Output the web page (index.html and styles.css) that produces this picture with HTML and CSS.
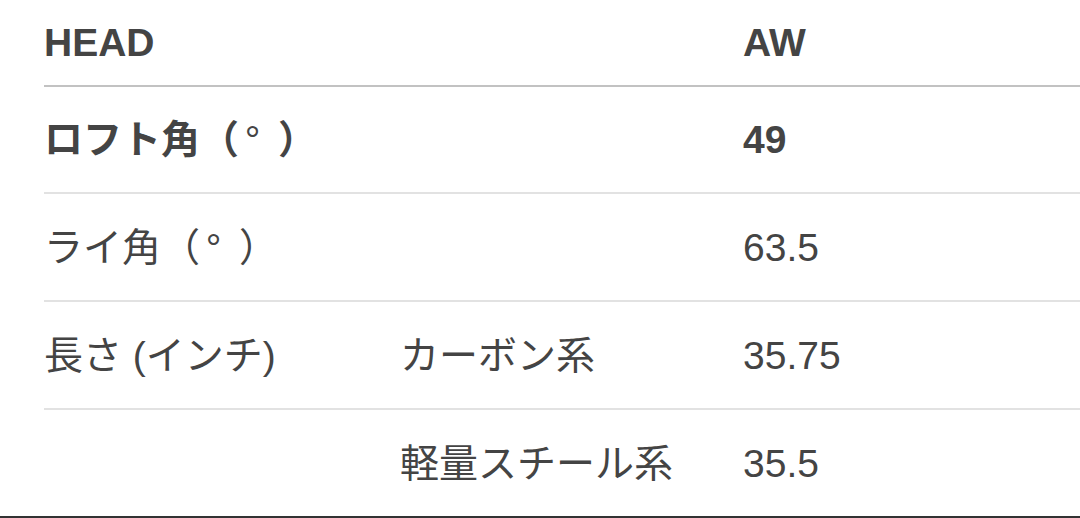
FILE: index.html
```html
<!DOCTYPE html>
<html lang="ja">
<head>
<meta charset="utf-8">
<link rel="stylesheet" href="styles.css">
</head>
<body>
<div class="spec">
  <div class="row head">
    <div class="cell">HEAD</div>
    <div class="cell"></div>
    <div class="cell">AW</div>
  </div>
  <div class="row strong">
    <div class="cell">ロフト角（<span class="deg">°</span>）</div>
    <div class="cell"></div>
    <div class="cell">49</div>
  </div>
  <div class="row">
    <div class="cell">ライ角（<span class="deg">°</span>）</div>
    <div class="cell"></div>
    <div class="cell">63.5</div>
  </div>
  <div class="row">
    <div class="cell">長さ (インチ)</div>
    <div class="cell">カーボン系</div>
    <div class="cell">35.75</div>
  </div>
  <div class="row last">
    <div class="cell"></div>
    <div class="cell">軽量スチール系</div>
    <div class="cell">35.5</div>
  </div>
</div>
<div class="edge"></div>
</body>
</html>
```
FILE: styles.css
```css
html, body {
  margin: 0;
  padding: 0;
  background: #ffffff;
}
body {
  width: 1080px;
  height: 518px;
  overflow: hidden;
  font-family: "Liberation Sans", "Noto Sans CJK JP", sans-serif;
  font-size: 39px;
  color: #444444;
}
.spec {
  padding-left: 44px;
}
.row {
  display: grid;
  grid-template-columns: 356px 343px 1fr;
  align-items: center;
  height: 106px;
  border-bottom: 2px solid #e2e2e2;
}
.row.head {
  height: 85px;
  border-bottom: 2px solid #c2c2c2;
  font-weight: bold;
}
.row.strong {
  height: 105px;
  font-weight: bold;
}
.row.last {
  border-bottom: none;
}
.cell {
  white-space: nowrap;
  line-height: 1;
}
.deg {
  display: inline-block;
  width: 1em;
  padding-left: 0.15em;
  box-sizing: border-box;
  font-weight: normal;
}
.edge {
  height: 2px;
  background: #333333;
}
```
